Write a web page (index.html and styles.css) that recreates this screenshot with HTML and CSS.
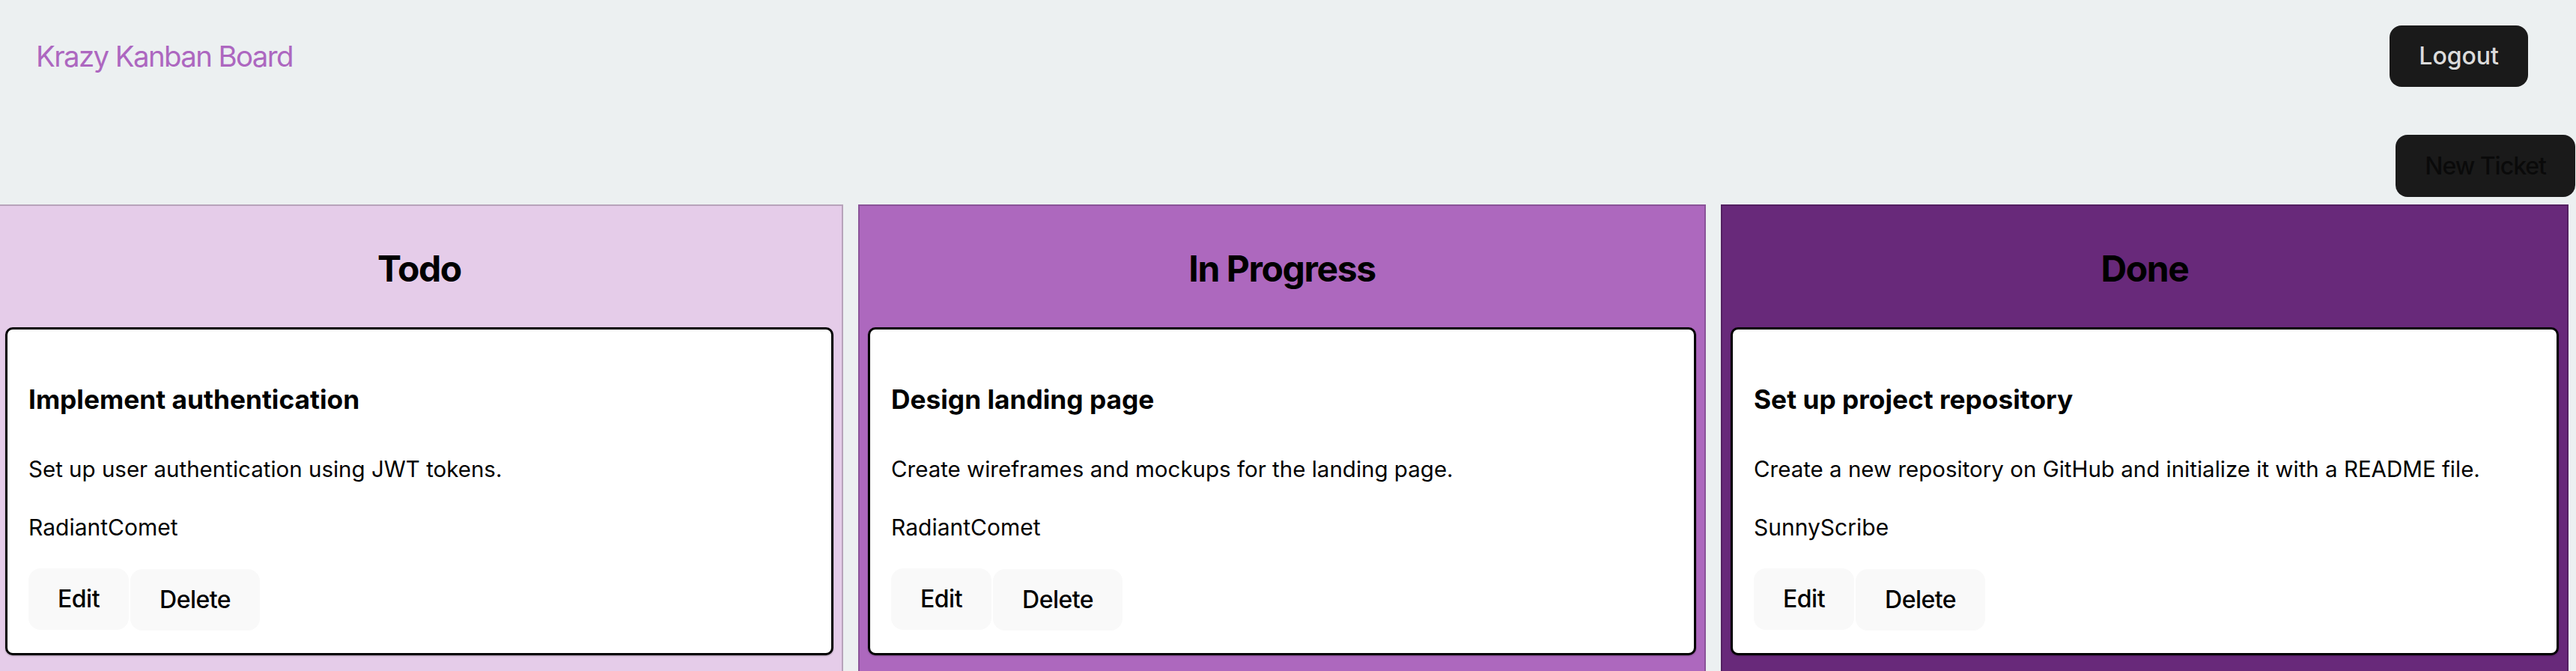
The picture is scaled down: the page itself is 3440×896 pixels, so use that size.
FILE: index.html
```html
<!DOCTYPE html>
<html lang="en">
<head>
<meta charset="utf-8">
<title>Krazy Kanban Board</title>
<link rel="stylesheet" href="styles.css">
</head>
<body>
  <header class="header">
    <h1 class="brand">Krazy Kanban Board</h1>
    <button class="btn btn-dark">Logout</button>
  </header>
  <div class="toolbar">
    <button class="btn btn-new">New Ticket</button>
  </div>
  <main class="board">
    <section class="column col-todo">
      <h2 class="column-title">Todo</h2>
      <article class="card">
        <h3 class="card-title">Implement authentication</h3>
        <p class="card-desc">Set up user authentication using JWT tokens.</p>
        <p class="card-user">RadiantComet</p>
        <div class="actions">
          <button class="btn btn-light">Edit</button>
          <button class="btn btn-light btn-low">Delete</button>
        </div>
      </article>
    </section>
    <section class="column col-progress">
      <h2 class="column-title">In Progress</h2>
      <article class="card">
        <h3 class="card-title">Design landing page</h3>
        <p class="card-desc">Create wireframes and mockups for the landing page.</p>
        <p class="card-user">RadiantComet</p>
        <div class="actions">
          <button class="btn btn-light">Edit</button>
          <button class="btn btn-light btn-low">Delete</button>
        </div>
      </article>
    </section>
    <section class="column col-done">
      <h2 class="column-title">Done</h2>
      <article class="card">
        <h3 class="card-title">Set up project repository</h3>
        <p class="card-desc">Create a new repository on GitHub and initialize it with a README file.</p>
        <p class="card-user">SunnyScribe</p>
        <div class="actions">
          <button class="btn btn-light">Edit</button>
          <button class="btn btn-light btn-low">Delete</button>
        </div>
      </article>
    </section>
  </main>
</body>
</html>
```

FILE: styles.css
```css
html, body {
  margin: 0;
  padding: 0;
  overflow: hidden;
}

body {
  background: #ecf0f1;
  font-family: Inter, "Noto Sans", sans-serif;
  color: #000;
}

.header {
  display: flex;
  justify-content: space-between;
  align-items: center;
  padding: 34px 64px 0 48px;
}

.brand {
  margin: 0;
  font-size: 38.4px;
  line-height: 46px;
  font-weight: 400;
  letter-spacing: -1.6px;
  color: #ad67c0;
}

.btn {
  font-family: Inter, "Noto Sans", sans-serif;
  font-size: 32px;
  font-weight: 500;
  height: 82px;
  line-height: 80px;
  padding: 0 38px;
  border: 1px solid transparent;
  border-radius: 16px;
  cursor: pointer;
}

.btn-dark {
  background: #1a1a1a;
  color: rgba(255, 255, 255, 0.87);
}

.btn-new {
  background: #1a1a1a;
  color: #0a0a0a;
  height: 83px;
  letter-spacing: -1px;
}

.btn-light {
  background: #f9f9f9;
  color: #000;
  letter-spacing: -0.5px;
}

.btn-low {
  margin-top: 1px;
}

.toolbar {
  display: flex;
  justify-content: flex-end;
  margin-top: 64px;
  padding-right: 1px;
}

.board {
  display: flex;
  gap: 20px;
  margin: 10px 10px 0 -6px;
}

.column {
  flex: 1;
  min-width: 0;
  border: 2px solid rgba(0, 0, 0, 0.2);
  padding: 0 11px 40px;
}

.col-todo { background: #e5cce9; }
.col-progress { background: #ad68be; }
.col-done { background: #68297a; }

.column-title {
  margin: 48px 0 42px;
  font-size: 48px;
  line-height: 72px;
  font-weight: 700;
  letter-spacing: -1.4px;
  text-align: center;
  color: #000;
}

.card {
  background: #fff;
  border: 3px solid #000;
  border-radius: 10px;
  padding: 0 28px 30px;
  box-shadow: 0 1px 2px rgba(0, 0, 0, 0.3);
}

.card-title {
  margin: 70px 0 47px;
  font-size: 35.3px;
  line-height: 48px;
  font-weight: 700;
}

.card-desc {
  margin: 0 0 36px;
  font-size: 29.5px;
  line-height: 42px;
}

.card-user {
  margin: 0 0 34px;
  font-size: 30px;
  line-height: 42px;
}

.actions {
  display: flex;
  align-items: flex-start;
  gap: 2px;
}
```
